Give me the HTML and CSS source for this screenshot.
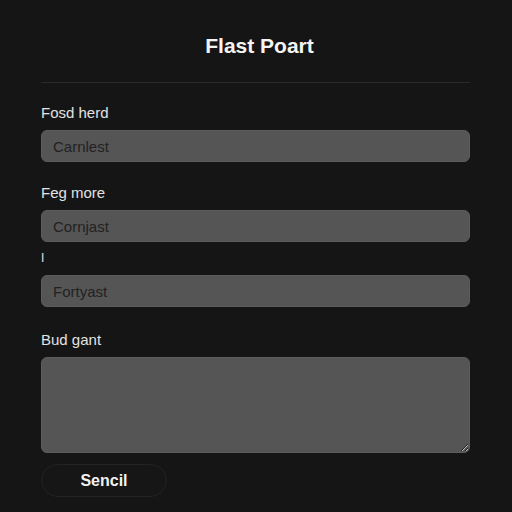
FILE: index.html
```html
<!DOCTYPE html>
<html>
<head>
<meta charset="utf-8">
<link rel="stylesheet" href="styles.css">
</head>
<body>
<div class="page">
  <h1 class="title">Flast Poart</h1>
  <div class="divider"></div>
  <form class="form">
    <label class="label l1">Fosd herd</label>
    <input class="field" type="text" placeholder="Carnlest">
    <label class="label l2">Feg more</label>
    <input class="field" type="text" placeholder="Cornjast">
    <label class="label l3">I</label>
    <input class="field" type="text" placeholder="Fortyast">
    <label class="label l4">Bud gant</label>
    <textarea class="area"></textarea>
    <button class="btn" type="button">Sencil</button>
  </form>
</div>
</body>
</html>
```

FILE: styles.css
```css
html, body {
  margin: 0;
  padding: 0;
  background: #151515;
}
body {
  font-family: "Liberation Sans", Arial, sans-serif;
  color: #e6e6e6;
}
.page {
  width: 429px;
  margin: 0 auto 0 41px;
  display: flex;
  flex-direction: column;
}
.title {
  margin: 33px 0 0;
  height: 26px;
  line-height: 26px;
  text-align: center;
  font-size: 21px;
  font-weight: bold;
  color: #f4f4f4;
  padding-left: 8px;
}
.divider {
  margin-top: 23px;
  height: 1px;
  background: #2a2a2a;
}
.form {
  display: flex;
  flex-direction: column;
}
.label {
  font-size: 15px;
  line-height: 18px;
  color: #e2e2e2;
  height: 18px;
}
.l1 { margin-top: 21px; margin-bottom: 8px; }
.l2 { margin-top: 22px; margin-bottom: 8px; }
.l3 { margin-top: 7px; margin-bottom: 8px; font-size: 12px; }
.l4 { margin-top: 24px; margin-bottom: 8px; }
.field, .area {
  box-sizing: border-box;
  width: 429px;
  background: #555555;
  border: 1px solid #5c5c5c;
  border-radius: 6px;
  font-family: "Liberation Sans", Arial, sans-serif;
  font-size: 15px;
  color: #222222;
  padding: 0 11px;
  outline: none;
}
.field {
  height: 32px;
}
.field::placeholder {
  color: #222222;
  opacity: 1;
}
.area {
  height: 96px;
  resize: vertical;
  display: block;
}
.btn {
  margin-top: 11px;
  width: 126px;
  height: 33px;
  border-radius: 17px;
  border: 1px solid #232323;
  background: #161616;
  color: #f2f2f2;
  font-family: "Liberation Sans", Arial, sans-serif;
  font-size: 16px;
  font-weight: bold;
  padding: 0;
}
```
